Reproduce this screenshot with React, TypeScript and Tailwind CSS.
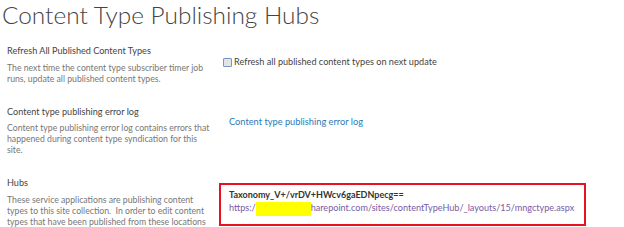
import React from 'react'

const FONT = { fontFamily: 'Lato, "Open Sans", sans-serif' }

/* ── Section row ─────────────────────────────────────── */

interface SectionProps {
  title: string
  description: string
  children: React.ReactNode
  rightClass?: string
}

function Section({ title, description, children, rightClass = '' }: Readonly<SectionProps>) {
  return (
    <div className="flex">
      <div className="w-[219px] shrink-0 pl-[7px] pr-[4px]">
        <h3 className="text-[9.1px] leading-[12px] text-[#444]">{title}</h3>
        {/* line breaks follow the original page's wrapping */}
        <p className="mt-[4.5px] whitespace-pre-line text-[8.7px] leading-[11px] text-[#777]">{description}</p>
      </div>
      <div className={`flex-1 ${rightClass}`}>{children}</div>
    </div>
  )
}

export default function App() {
  return (
    <div className="h-[227px] w-[624px] overflow-hidden bg-white" style={FONT}>
      <h1 className="h-[45px] pl-[2px] text-[24.4px] font-light leading-[29.5px] text-[#444]">
        Content Type Publishing Hubs
      </h1>

      <div className="flex flex-col gap-[22px]">
        <Section
          title="Refresh All Published Content Types"
          description={'The next time the content type subscriber timer job\nruns, update all published content types.'}
          rightClass="pt-[11px] pl-[4px]"
        >
          <label className="flex items-center gap-[2px] text-[9.15px] leading-[12px] text-[#444]">
            <span className="inline-block h-[9px] w-[9px] rounded-[1px] border border-[#7a96c8] bg-[#e4e4e4]" />
            Refresh all published content types on next update
          </label>
        </Section>

        <Section
          title="Content type publishing error log"
          description={'Content type publishing error log contains errors that\nhappened during content type syndication for this\nsite.'}
          rightClass="pt-[10px] pl-[10px]"
        >
          <a className="block text-[9.25px] leading-[12px] text-[#2a7ab5]">Content type publishing error log</a>
        </Section>

        <Section
          title="Hubs"
          description={'These service applications are publishing content\ntypes to this site collection.\u00a0 In order to edit content\ntypes that have been published from these locations'}
          rightClass="pt-[6px]"
        >
          <div className="w-[367px] border-2 border-[#e81123] pl-[8px] pt-[4px] pb-[8px]">
            <div className="text-[9px] font-bold leading-[12px] text-[#333]">
              Taxonomy_V+/vrDV+HWcv6gaEDNpecg==
            </div>
            <div className="whitespace-nowrap text-[9.1px] leading-[13px] text-[#7a5aa6]">
              https:/
              <span className="inline-block h-[14px] w-[55px] bg-[#ffff00] align-middle" />
              harepoint.com/sites/contentTypeHub/_layouts/15/mngctype.aspx
            </div>
          </div>
        </Section>
      </div>
    </div>
  )
}
